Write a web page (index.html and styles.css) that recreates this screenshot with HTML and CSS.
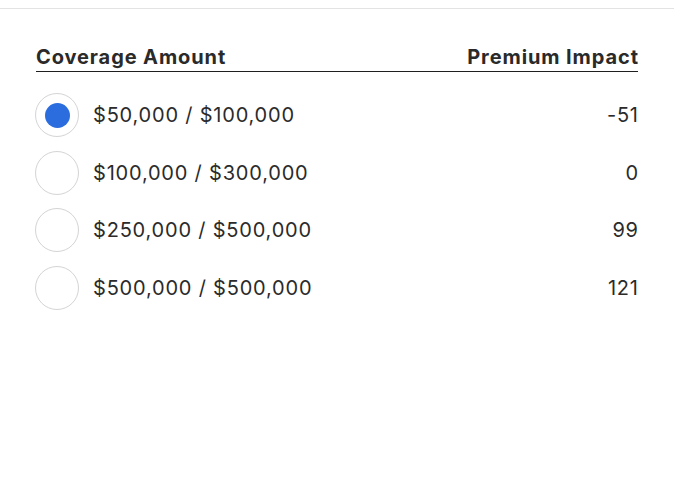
FILE: index.html
```html
<!DOCTYPE html>
<html>
<head>
<meta charset="utf-8">
<link rel="stylesheet" href="styles.css">
</head>
<body>
<div class="page">
  <div class="panel">
    <div class="head">
      <span>Coverage Amount</span>
      <span>Premium Impact</span>
    </div>
    <div class="rows">
      <label class="row">
        <span class="radio checked"><span class="dot"></span></span>
        <span class="amount">$50,000 / $100,000</span>
        <span class="impact">-51</span>
      </label>
      <label class="row">
        <span class="radio"></span>
        <span class="amount">$100,000 / $300,000</span>
        <span class="impact">0</span>
      </label>
      <label class="row">
        <span class="radio"></span>
        <span class="amount">$250,000 / $500,000</span>
        <span class="impact">99</span>
      </label>
      <label class="row">
        <span class="radio"></span>
        <span class="amount">$500,000 / $500,000</span>
        <span class="impact">121</span>
      </label>
    </div>
  </div>
</div>
</body>
</html>
```
FILE: styles.css
```css
html, body {
  margin: 0;
  padding: 0;
  background: #ffffff;
}
body {
  font-family: Inter, "Liberation Sans", sans-serif;
  color: #2b2b2b;
}
.page {
  margin-top: 8px;
  border-top: 1px solid #e3e3e3;
}
.panel {
  padding: 35px 36px 0 36px;
}
.head {
  display: flex;
  justify-content: space-between;
  align-items: flex-end;
  font-size: 20px;
  font-weight: 700;
  line-height: 26px;
  letter-spacing: 0.9px;
  color: #2a2a2a;
  border-bottom: 1px solid #1f1f1f;
  padding-bottom: 1px;
}
.head span:last-child {
  margin-right: -0.9px;
}
.rows {
  display: flex;
  flex-direction: column;
  gap: 13.5px;
  padding-top: 21px;
}
.row {
  display: flex;
  align-items: center;
  height: 44px;
  font-size: 20px;
  letter-spacing: 0.8px;
  color: #2b2b2b;
}
.radio {
  width: 42px;
  height: 42px;
  border: 1px solid #d4d4d4;
  border-radius: 50%;
  box-sizing: content-box;
  display: flex;
  align-items: center;
  justify-content: center;
  flex-shrink: 0;
  margin-left: -1px;
}
.dot {
  width: 25px;
  height: 25px;
  border-radius: 50%;
  background: #2b6ddf;
}
.amount {
  margin-left: 14px;
  flex: 1;
}
.impact {
  text-align: right;
  margin-right: -0.8px;
}
```
